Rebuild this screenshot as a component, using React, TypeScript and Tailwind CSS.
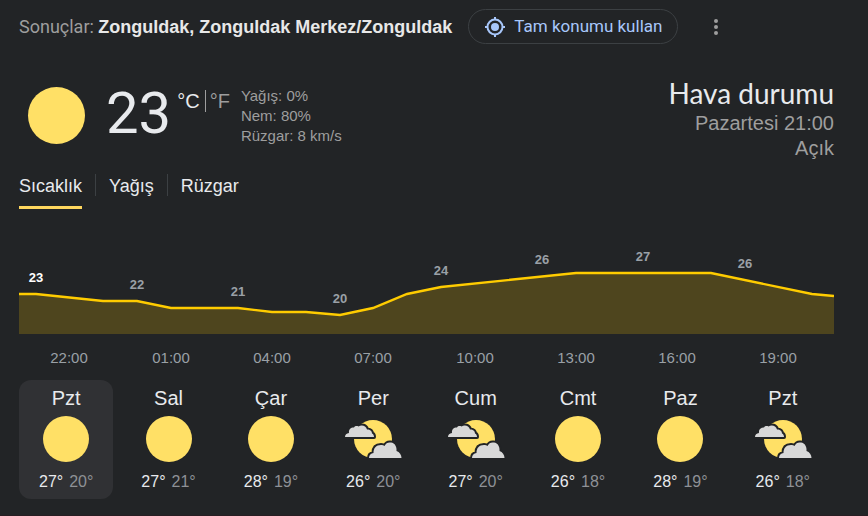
import { useState } from "react";

type Sky = "clear" | "partly";

const days: { name: string; sky: Sky; high: number; low: number }[] = [
  { name: "Pzt", sky: "clear", high: 27, low: 20 },
  { name: "Sal", sky: "clear", high: 27, low: 21 },
  { name: "Çar", sky: "clear", high: 28, low: 19 },
  { name: "Per", sky: "partly", high: 26, low: 20 },
  { name: "Cum", sky: "partly", high: 27, low: 20 },
  { name: "Cmt", sky: "clear", high: 26, low: 18 },
  { name: "Paz", sky: "clear", high: 28, low: 19 },
  { name: "Pzt", sky: "partly", high: 26, low: 18 },
];

const tabs = ["Sıcaklık", "Yağış", "Rüzgar"];

// chart line, x / y in viewBox units
const line = [
  [0, 54], [17, 54], [84, 61], [118, 61], [152, 68], [219, 68], [253, 72], [287, 72],
  [321, 75], [354, 68], [388, 54], [422, 47], [557, 33], [692, 33], [793, 54], [815, 56],
];

const temps = [
  { x: 17, y: 42, value: 23 },
  { x: 118, y: 49, value: 22 },
  { x: 219, y: 56, value: 21 },
  { x: 321, y: 63, value: 20 },
  { x: 422, y: 35, value: 24 },
  { x: 523, y: 24, value: 26 },
  { x: 624, y: 21, value: 27 },
  { x: 726, y: 28, value: 26 },
];

const hours = [
  { x: 50, label: "22:00" },
  { x: 152, label: "01:00" },
  { x: 253, label: "04:00" },
  { x: 354, label: "07:00" },
  { x: 456, label: "10:00" },
  { x: 557, label: "13:00" },
  { x: 658, label: "16:00" },
  { x: 759, label: "19:00" },
];

function SkyIcon({ sky }: { sky: Sky }) {
  if (sky === "clear") {
    return (
      <svg viewBox="0 0 60 48" className="h-12 w-15" aria-hidden="true">
        <circle cx="30" cy="24" r="23" fill="#ffe066" />
      </svg>
    );
  }
  return (
    <svg viewBox="0 0 60 48" className="h-12 w-15" aria-hidden="true">
      <circle cx="30" cy="24" r="19" fill="#ffe066" />
      <g fill="#d8d8d8" stroke="#222426" strokeWidth="4" strokeLinejoin="round" paintOrder="stroke">
        <path d="M2 22C2 19.500 3.500 18.500 6 18C5.500 14.500 7.500 12.500 11 12.500C12 10.800 14 10.800 15.500 11.500C18.500 9.500 23 10.500 24 14.500C27.500 14.500 29 16.500 29 18.500C30.500 19 31 20.500 31 22Z" />
        <path d="M26 43C26 40 28 38.500 30.500 38C30.500 33 33 30 38 30C39.500 30 40.500 30 41.500 31C43 28 45 27 48 27.500C52 28 54 32 53.500 36C56.500 37 58.500 40 58.500 43Z" />
      </g>
    </svg>
  );
}

function TemperatureChart() {
  const points = line.map((p) => p.join(",")).join(" ");
  return (
    <svg
      viewBox="0 0 815 134"
      className="block w-full"
      role="img"
      aria-label="Saatlik sıcaklık"
      textAnchor="middle"
    >
      <polygon points={`0,94 ${points} 815,94`} fill="#ffcc00" fillOpacity="0.2" />
      <polyline points={points} fill="none" stroke="#ffcc00" strokeWidth="2.4" />
      {temps.map((t, i) => (
        <text key={t.x} x={t.x} y={t.y} fontSize="13" fontWeight="700" fill={i === 0 ? "#ffffff" : "#9aa0a6"}>
          {t.value}
        </text>
      ))}
      {hours.map((h) => (
        <text key={h.x} x={h.x} y="123" fontSize="15" fill="#9aa0a6">
          {h.label}
        </text>
      ))}
    </svg>
  );
}

export default function App() {
  const [tab, setTab] = useState(0);
  const [day, setDay] = useState(0);

  return (
    <main className="min-h-screen border-b border-[#281d22] bg-[#222426] pt-[9px] pr-[34px] pb-4 pl-[19px] font-['Liberation_Sans',Arial,sans-serif] text-[#e8eaed]">
      <header className="flex items-center">
        <p className="font-[Roboto,sans-serif] text-[18px] leading-6 text-[#9e9e9e]">
          Sonuçlar: <b className="font-['Liberation_Sans',Arial,sans-serif] text-[#e8e8e8]">Zonguldak, Zonguldak Merkez/Zonguldak</b>
        </p>
        <button className="ml-4 flex h-[35px] items-center gap-2 rounded-full border border-[#3c4043] px-[15px] font-[Roboto,sans-serif] text-[17px] text-[#a8c7fa]">
          <svg viewBox="0 0 22 22" className="size-[22px]" fill="none" stroke="currentColor" strokeWidth="2" aria-hidden="true">
            <circle cx="11" cy="11" r="7.5" />
            <circle cx="11" cy="11" r="4" fill="currentColor" stroke="none" />
            <path d="M11 1v3M11 18v3M1 11h3M18 11h3" />
          </svg>
          Tam konumu kullan
        </button>
        <button aria-label="Diğer seçenekler" className="ml-[26px] text-[#9e9e9e]">
          <svg viewBox="0 0 24 24" className="size-6" fill="currentColor" aria-hidden="true">
            <circle cx="12" cy="6" r="2" />
            <circle cx="12" cy="12" r="2" />
            <circle cx="12" cy="18" r="2" />
          </svg>
        </button>
      </header>

      <section className="mt-8 flex justify-between">
        <div className="flex">
          <svg viewBox="0 0 76 76" className="size-[76px]" aria-hidden="true">
            <circle cx="37.500" cy="39.500" r="28.500" fill="#ffe066" />
          </svg>
          <span className="ml-[11px] pt-2 font-[Roboto,sans-serif] text-[58px] leading-[58px]">23</span>
          <div className="mt-[14px] ml-[6px] flex h-[22px] items-center text-[20px] leading-[22px]">
            <button className="pr-[5px]">°C</button>
            <button className="border-l border-[#9e9e9e] pl-1 text-[#9e9e9e]">°F</button>
          </div>
          <div className="ml-[11px] pt-[10px] text-[15px] leading-5 text-[#9e9e9e]">
            <p>Yağış: 0%</p>
            <p>Nem: 80%</p>
            <p>Rüzgar: 8 km/s</p>
          </div>
        </div>
        <div className="text-right text-[20px] leading-[25px] text-[#9e9e9e]">
          <h1 className="font-[Lato,sans-serif] text-[28px] leading-[35px] text-[#e8eaed]">Hava durumu</h1>
          <p>Pazartesi 21:00</p>
          <p>Açık</p>
        </div>
      </section>

      <div role="tablist" className="mt-[13px] flex items-start">
        {tabs.map((label, i) => (
          <div key={label} className="flex items-start">
            {i > 0 && <span className="mx-[13px] h-[22px] w-px bg-[#3c4043]" />}
            <button
              role="tab"
              aria-selected={i === tab}
              onClick={() => setTab(i)}
              className={`h-[35px] border-b-3 pb-2 text-[18px] leading-6 ${i === tab ? "border-[#ffd75e]" : "border-transparent"}`}
            >
              {label}
            </button>
          </div>
        ))}
      </div>

      <div className="mt-[31px]">
        <TemperatureChart />
      </div>

      <div className="mr-1 mt-[6px] grid grid-cols-8 gap-2">
        {days.map((d, i) => (
          <button
            key={i}
            onClick={() => setDay(i)}
            className={`flex flex-col items-center rounded-xl pt-[6px] pb-[5px] ${i === day ? "bg-[#303134]" : ""}`}
          >
            <span className="text-[20px] leading-6">{d.name}</span>
            <span className="mt-[5px] mb-[7px]">
              <SkyIcon sky={d.sky} />
            </span>
            <span className="flex gap-[6px] text-[16px] leading-6">
              <span>{d.high}°</span>
              <span className="text-[#8e9196]">{d.low}°</span>
            </span>
          </button>
        ))}
      </div>
    </main>
  );
}
